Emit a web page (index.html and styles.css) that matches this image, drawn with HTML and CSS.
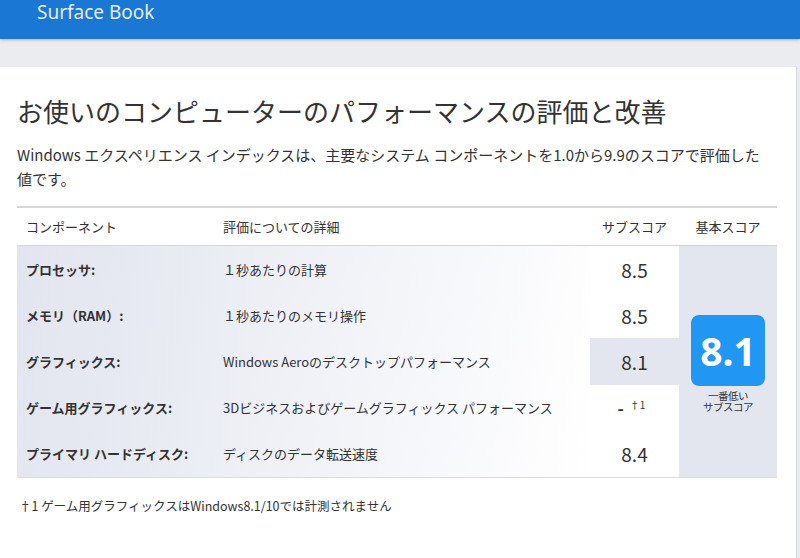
FILE: index.html
```html
<!DOCTYPE html>
<html lang="ja">
<head>
<meta charset="utf-8">
<title>Surface Book</title>
<link rel="stylesheet" href="styles.css">
</head>
<body>
<header class="topbar"><span class="brand">Surface Book</span></header>
<div class="strip"></div>
<main class="card">
  <h1 class="title">お使いのコンピューターのパフォーマンスの評価と改善</h1>
  <p class="lead">Windows エクスペリエンス インデックスは、主要なシステム コンポーネントを1.0から9.9のスコアで評価した値です。</p>
  <div class="wei">
    <div class="head">
      <div class="h h-comp">コンポーネント</div>
      <div class="h h-desc">評価についての詳細</div>
      <div class="h h-sub">サブスコア</div>
      <div class="h h-base">基本スコア</div>
    </div>
    <div class="body">
      <div class="lbl r1">プロセッサ:</div>
      <div class="desc r1">１秒あたりの計算</div>
      <div class="sub r1">8.5</div>

      <div class="lbl r2">メモリ（RAM）:</div>
      <div class="desc r2">１秒あたりのメモリ操作</div>
      <div class="sub r2">8.5</div>

      <div class="lbl r3">グラフィックス:</div>
      <div class="desc r3">Windows Aeroのデスクトップパフォーマンス</div>
      <div class="sub r3 low">8.1</div>

      <div class="lbl r4">ゲーム用グラフィックス:</div>
      <div class="desc r4">3Dビジネスおよびゲームグラフィックス パフォーマンス</div>
      <div class="sub r4"><span class="dash">-</span><sup class="note">†1</sup></div>

      <div class="lbl r5">プライマリ ハードディスク:</div>
      <div class="desc r5">ディスクのデータ転送速度</div>
      <div class="sub r5">8.4</div>

      <div class="base">
        <div class="badge">8.1</div>
        <div class="cap"><span class="cap-line">一番低い</span><span class="cap-line">サブスコア</span></div>
      </div>
    </div>
  </div>
  <p class="foot">†1 ゲーム用グラフィックスはWindows8.1/10では計測されません</p>
</main>
</body>
</html>
```

FILE: styles.css
```css
* { box-sizing: border-box; }
html, body { margin: 0; padding: 0; }
body {
  background: #eaecef;
  font-family: "Noto Sans CJK JP", "Noto Sans", sans-serif;
  color: #333;
  height: 558px;
  overflow: hidden;
}
.topbar {
  height: 39px;
  background: #1a77d3;
  padding: 0 0 0 37px;
  box-shadow: 0 1px 3px rgba(0,0,0,0.25);
  position: relative;
}
.brand {
  font-family: "Noto Sans", sans-serif;
  font-size: 19px;
  line-height: 24px;
  color: #e4edf9;
  display: block;
}
.strip { height: 28px; }
.card {
  background: #fff;
  margin-right: 4px;
  padding: 26px 0 0 17px;
  height: 491px;
  box-shadow: 1px 0 1px rgba(0,0,0,0.08);
}
.title {
  margin: 0;
  font-size: 26px;
  font-weight: 400;
  line-height: 36px;
  color: #333;
}
.lead {
  margin: 14px 0 0;
  width: 756px;
  font-size: 15px;
  line-height: 24px;
}
.wei {
  width: 760px;
  margin-top: 15px;
  border-top: 2px solid #d6d6d6;
  border-bottom: 1px solid #dcdcdc;
}
.head, .body {
  display: grid;
  grid-template-columns: 196px 377px 89px 98px;
}
.head {
  height: 38px;
  border-bottom: 1px solid #d6d6d6;
  font-size: 13px;
  align-items: center;
}
.h-comp { padding-left: 9px; }
.h-desc { padding-left: 10px; }
.h-sub, .h-base { text-align: center; }
.body {
  grid-template-rows: repeat(5, 46.2px);
  background: linear-gradient(100deg, #e2e4ef 0%, #eef0f6 45%, #ffffff 100%) no-repeat 0 0 / 573px 100%;
  font-size: 13px;
}
.body > div { display: flex; align-items: center; }
.r1 { grid-row: 1; }
.r2 { grid-row: 2; }
.r3 { grid-row: 3; }
.r4 { grid-row: 4; }
.r5 { grid-row: 5; }
.lbl { grid-column: 1; padding-left: 9px; font-weight: 700; }
.desc { grid-column: 2; padding-left: 10px; }
.sub {
  grid-column: 3;
  justify-content: center;
  font-size: 19px;
  background: #fff;
}
.sub.low { background: #e3e5ef; }
.dash { font-weight: 700; font-size: 17px; margin-left: -6px; color: #333; }
.note { font-size: 10px; margin-left: 6px; position: relative; top: -3px; color: #333; }
.base {
  grid-column: 4;
  grid-row: 1 / 6;
  background: #e3e5ef;
  flex-direction: column;
  justify-content: center;
}
.badge {
  width: 74px;
  height: 71px;
  border-radius: 8px;
  background: #2196f3;
  color: #fff;
  font-family: "Noto Sans", sans-serif;
  font-weight: 700;
  font-size: 39px;
  display: flex;
  align-items: center;
  justify-content: center;
  margin-top: 4px;
}
.cap {
  display: flex;
  flex-direction: column;
  align-items: center;
  margin-top: 4px;
}
.cap-line {
  display: block;
  font-size: 10.5px;
  line-height: 11px;
  height: 11px;
  overflow: visible;
  letter-spacing: -0.5px;
}
.foot {
  margin: 20px 0 0 2px;
  font-size: 12.5px;
  line-height: 16px;
}
```
